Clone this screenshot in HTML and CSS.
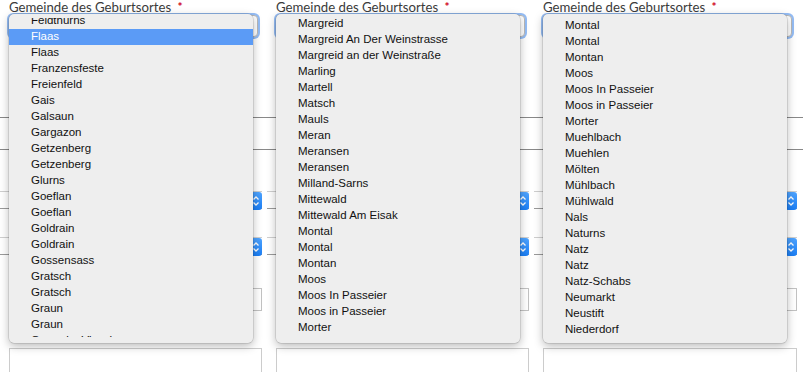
FILE: index.html
```html
<!DOCTYPE html>
<html lang="de">
<head>
<meta charset="utf-8">
<title>Geburtsort</title>
<link rel="stylesheet" href="styles.css">
</head>
<body>
<div class="page">
  <div class="cols top">
    <div class="col">
      <label class="lbl">Gemeinde des Geburtsortes <span class="req">*</span></label>
      <div class="sel focus"></div>
      <div class="menu">
        <div class="view">
          <ul class="list off-a">
            <li>Feldthurns</li><li class="on">Flaas</li><li>Flaas</li><li>Franzensfeste</li><li>Freienfeld</li><li>Gais</li><li>Galsaun</li><li>Gargazon</li><li>Getzenberg</li><li>Getzenberg</li><li>Glurns</li><li>Goeflan</li><li>Goeflan</li><li>Goldrain</li><li>Goldrain</li><li>Gossensass</li><li>Gratsch</li><li>Gratsch</li><li>Graun</li><li>Graun</li><li>Graun im Vinschgau</li>
          </ul>
        </div>
      </div>
    </div>
    <div class="col">
      <label class="lbl">Gemeinde des Geburtsortes <span class="req">*</span></label>
      <div class="sel focus"></div>
      <div class="menu">
        <div class="view">
          <ul class="list off-b">
            <li>Margreid</li><li>Margreid An Der Weinstrasse</li><li>Margreid an der Weinstraße</li><li>Marling</li><li>Martell</li><li>Matsch</li><li>Mauls</li><li>Meran</li><li>Meransen</li><li>Meransen</li><li>Milland-Sarns</li><li>Mittewald</li><li>Mittewald Am Eisak</li><li>Montal</li><li>Montal</li><li>Montan</li><li>Moos</li><li>Moos In Passeier</li><li>Moos in Passeier</li><li>Morter</li><li>Muehlbach</li>
          </ul>
        </div>
      </div>
    </div>
    <div class="col">
      <label class="lbl">Gemeinde des Geburtsortes <span class="req">*</span></label>
      <div class="sel focus"></div>
      <div class="menu">
        <div class="view">
          <ul class="list">
            <li>Montal</li><li>Montal</li><li>Montan</li><li>Moos</li><li>Moos In Passeier</li><li>Moos in Passeier</li><li>Morter</li><li>Muehlbach</li><li>Muehlen</li><li>Mölten</li><li>Mühlbach</li><li>Mühlwald</li><li>Nals</li><li>Naturns</li><li>Natz</li><li>Natz</li><li>Natz-Schabs</li><li>Neumarkt</li><li>Neustift</li><li>Niederdorf</li>
          </ul>
        </div>
      </div>
    </div>
  </div>

  <div class="band"></div>

  <div class="cols selrow">
    <div class="fsel"><span class="step"><svg viewBox="0 0 12 18" width="12" height="18"><path d="M3.5 7.5 L6 5 L8.5 7.5 M3.5 10.5 L6 13 L8.5 10.5" fill="none" stroke="#fff" stroke-width="1.3"/></svg></span></div>
    <div class="fsel"><span class="step"><svg viewBox="0 0 12 18" width="12" height="18"><path d="M3.5 7.5 L6 5 L8.5 7.5 M3.5 10.5 L6 13 L8.5 10.5" fill="none" stroke="#fff" stroke-width="1.3"/></svg></span></div>
    <div class="fsel"><span class="step"><svg viewBox="0 0 12 18" width="12" height="18"><path d="M3.5 7.5 L6 5 L8.5 7.5 M3.5 10.5 L6 13 L8.5 10.5" fill="none" stroke="#fff" stroke-width="1.3"/></svg></span></div>
  </div>

  <div class="cols selrow second">
    <div class="fsel"><span class="step"><svg viewBox="0 0 12 18" width="12" height="18"><path d="M3.5 7.5 L6 5 L8.5 7.5 M3.5 10.5 L6 13 L8.5 10.5" fill="none" stroke="#fff" stroke-width="1.3"/></svg></span></div>
    <div class="fsel"><span class="step"><svg viewBox="0 0 12 18" width="12" height="18"><path d="M3.5 7.5 L6 5 L8.5 7.5 M3.5 10.5 L6 13 L8.5 10.5" fill="none" stroke="#fff" stroke-width="1.3"/></svg></span></div>
    <div class="fsel"><span class="step"><svg viewBox="0 0 12 18" width="12" height="18"><path d="M3.5 7.5 L6 5 L8.5 7.5 M3.5 10.5 L6 13 L8.5 10.5" fill="none" stroke="#fff" stroke-width="1.3"/></svg></span></div>
  </div>

  <div class="cols boxes">
    <div class="sbox"></div><div class="sbox"></div><div class="sbox"></div>
  </div>

  <div class="cols inputs">
    <div class="inp"></div><div class="inp"></div><div class="inp"></div>
  </div>
</div>
</body>
</html>
```

FILE: styles.css
```css
html, body {
  margin: 0;
  padding: 0;
  background: #fff;
  overflow: hidden;
}

.page {
  width: 803px;
  height: 372px;
  overflow: hidden;
}

.cols {
  display: grid;
  grid-template-columns: 253px 253px 254px;
  column-gap: 14px;
  padding-left: 9px;
}

.col {
  position: relative;
  height: 38px;
}

.lbl {
  display: block;
  font-family: "Lato", "Liberation Sans", sans-serif;
  font-size: 13.2px;
  line-height: 14px;
  color: #3b3b3b;
  height: 14px;
  margin-top: 0;
  white-space: nowrap;
}

.req {
  color: #d0021b;
  font-size: 12px;
  font-weight: bold;
  vertical-align: 1px;
  margin-left: 3px;
}

.sel {
  margin-top: 1px;
  width: 247px;
  height: 20px;
  border-radius: 4px;
  border: 1px solid #b8b8b8;
  background: #fff;
}

.sel.focus {
  box-shadow: 0 0 0 2px rgba(92, 154, 240, 0.65);
}

.menu {
  position: absolute;
  top: 14px;
  left: 0;
  width: 244px;
  height: 329px;
  box-sizing: border-box;
  padding: 4px 0 6px;
  background: #eeeeee;
  border-radius: 5px;
  box-shadow: 0 0 0 0.5px rgba(0, 0, 0, 0.18), 0 3px 10px rgba(0, 0, 0, 0.28);
  z-index: 5;
}

.view {
  height: 100%;
  overflow: hidden;
}

.list {
  list-style: none;
  margin: 0;
  padding: 0;
  font-family: "Liberation Sans", Arial, sans-serif;
  font-size: 11.5px;
  color: #111;
}

.list.off-a { margin-top: -5px; }
.list.off-b { margin-top: -2px; }

.list li {
  height: 16px;
  line-height: 15px;
  padding-left: 22px;
  white-space: nowrap;
}

.list li.on {
  background: #5b9bf6;
  color: #fff;
}

.band {
  margin-top: 79px;
  height: 31px;
  border-top: 1px solid #888;
  border-bottom: 1px solid #888;
}

.selrow {
  margin-top: 41px;
}

.selrow.second {
  margin-top: 28px;
}

.fsel {
  margin-left: -9px;
  height: 16px;
  border-top: 1px solid #cfcfcf;
  border-bottom: 1px solid #9a9a9a;
  display: flex;
  justify-content: flex-end;
}

.step {
  display: block;
  width: 12px;
  height: 18px;
  margin-bottom: -1px;
  border-radius: 3px;
  background: linear-gradient(#4fa4ff, #1a7ef5);
}

.step svg {
  display: block;
}

.boxes {
  margin-top: 33px;
}

.sbox {
  height: 21px;
  border: 1px solid #c2c2c2;
  background: #fff;
}

.inputs {
  margin-top: 37px;
}

.inp {
  height: 24px;
  border: 1px solid #cccccc;
  background: #fff;
}
```
